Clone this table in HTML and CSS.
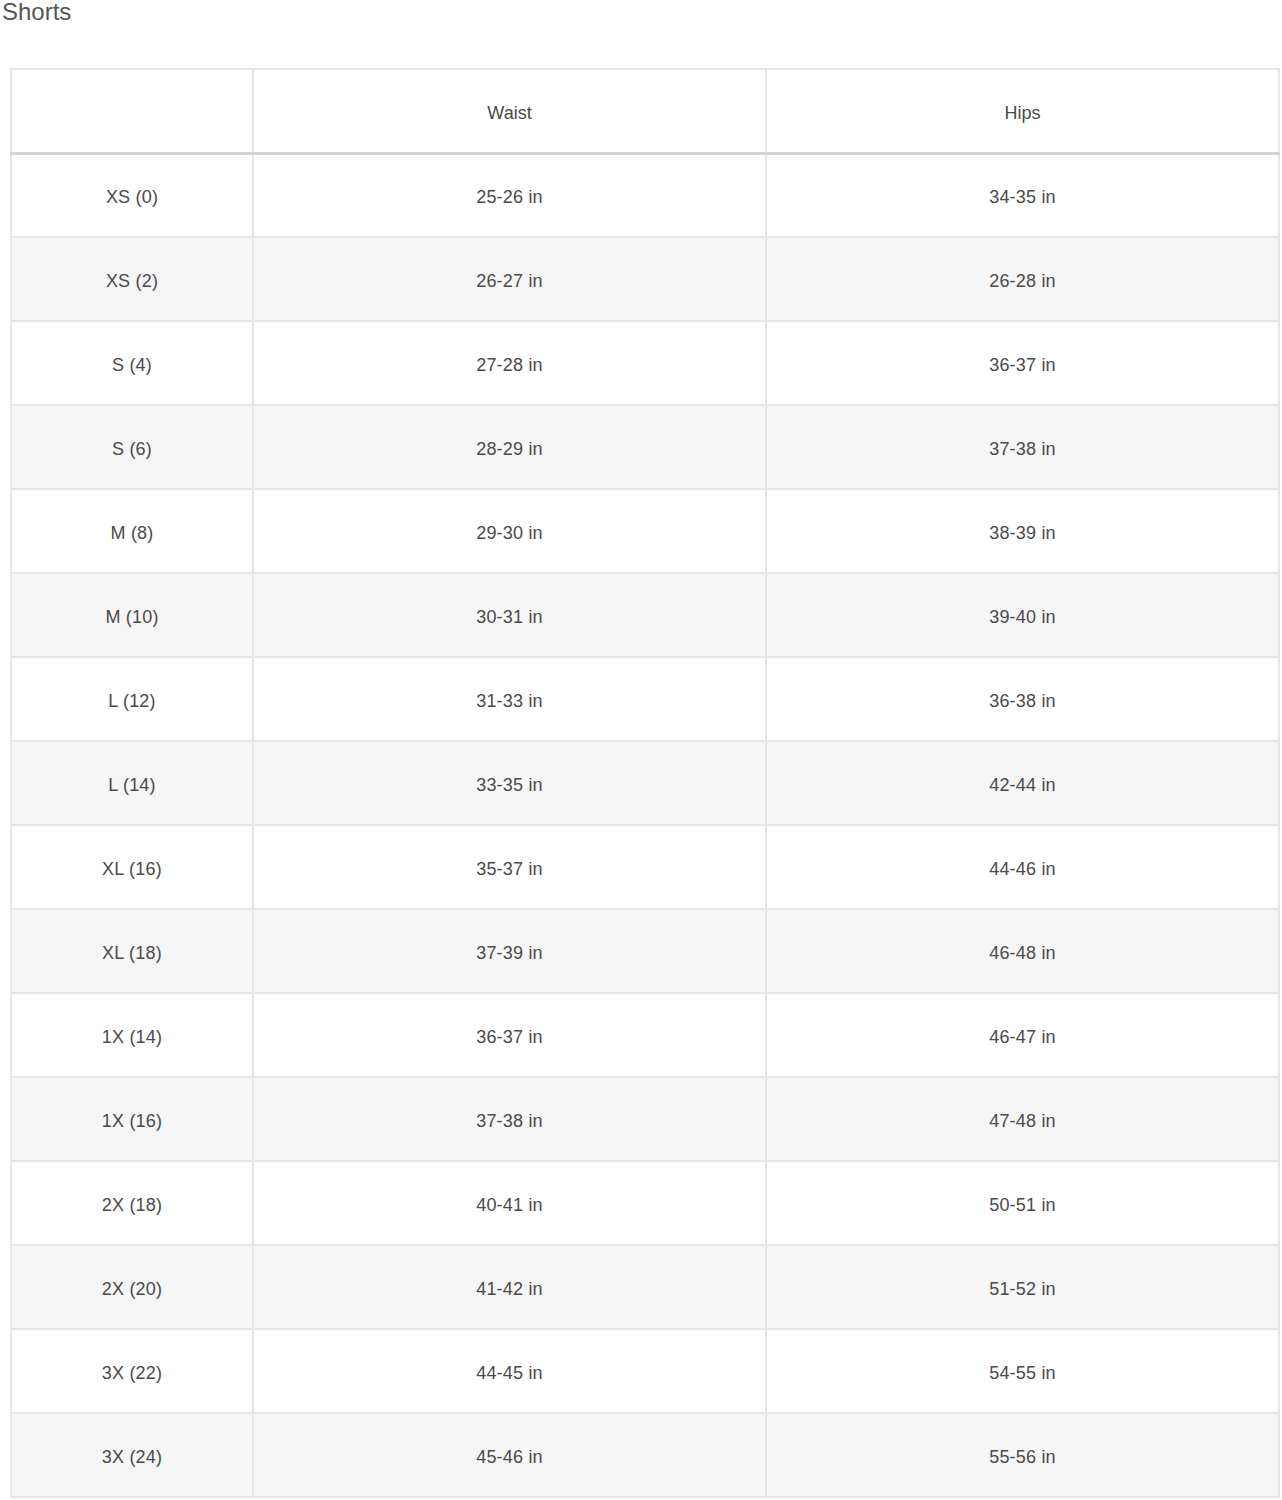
FILE: index.html
```html
<!DOCTYPE html>
<html>
<head>
<meta charset="utf-8">
<link rel="stylesheet" href="styles.css">
</head>
<body>
<h2 class="title">Shorts</h2>
<table class="size-table">
  <colgroup>
    <col class="c1"><col class="c2"><col class="c3">
  </colgroup>
  <thead>
    <tr><th></th><th>Waist</th><th>Hips</th></tr>
  </thead>
  <tbody>
    <tr><td>XS (0)</td><td>25-26 in</td><td>34-35 in</td></tr>
    <tr><td>XS (2)</td><td>26-27 in</td><td>26-28 in</td></tr>
    <tr><td>S (4)</td><td>27-28 in</td><td>36-37 in</td></tr>
    <tr><td>S (6)</td><td>28-29 in</td><td>37-38 in</td></tr>
    <tr><td>M (8)</td><td>29-30 in</td><td>38-39 in</td></tr>
    <tr><td>M (10)</td><td>30-31 in</td><td>39-40 in</td></tr>
    <tr><td>L (12)</td><td>31-33 in</td><td>36-38 in</td></tr>
    <tr><td>L (14)</td><td>33-35 in</td><td>42-44 in</td></tr>
    <tr><td>XL (16)</td><td>35-37 in</td><td>44-46 in</td></tr>
    <tr><td>XL (18)</td><td>37-39 in</td><td>46-48 in</td></tr>
    <tr><td>1X (14)</td><td>36-37 in</td><td>46-47 in</td></tr>
    <tr><td>1X (16)</td><td>37-38 in</td><td>47-48 in</td></tr>
    <tr><td>2X (18)</td><td>40-41 in</td><td>50-51 in</td></tr>
    <tr><td>2X (20)</td><td>41-42 in</td><td>51-52 in</td></tr>
    <tr><td>3X (22)</td><td>44-45 in</td><td>54-55 in</td></tr>
    <tr><td>3X (24)</td><td>45-46 in</td><td>55-56 in</td></tr>
  </tbody>
</table>
</body>
</html>
```
FILE: styles.css
```css
html, body {
  margin: 0;
  padding: 0;
  background: #ffffff;
}
body {
  font-family: "Liberation Sans", Arial, Helvetica, sans-serif;
  color: #4a4a4a;
}
.title {
  margin: 0 0 0 2px;
  font-size: 24px;
  line-height: 24px;
  font-weight: normal;
  color: #555555;
}
.size-table {
  margin: 44px 0 0 10px;
  width: 1268px;
  border-collapse: collapse;
  table-layout: fixed;
  border: 2px solid #e4e4e4;
}
.c1 { width: 242px; }
.c2 { width: 513px; }
.c3 { width: 513px; }
.size-table th,
.size-table td {
  height: 84px;
  padding: 5px 0 0 0;
  text-align: center;
  vertical-align: middle;
  font-size: 18px;
  font-weight: normal;
  color: #4a4a4a;
  border: 2px solid #e6e6e6;
  box-sizing: border-box;
}
.size-table td {
  letter-spacing: 0.2px;
}
.size-table thead th {
  border-bottom: 3px solid #d4d4d4;
}
.size-table tbody tr:nth-child(even) td {
  background: #f6f6f6;
}
```
